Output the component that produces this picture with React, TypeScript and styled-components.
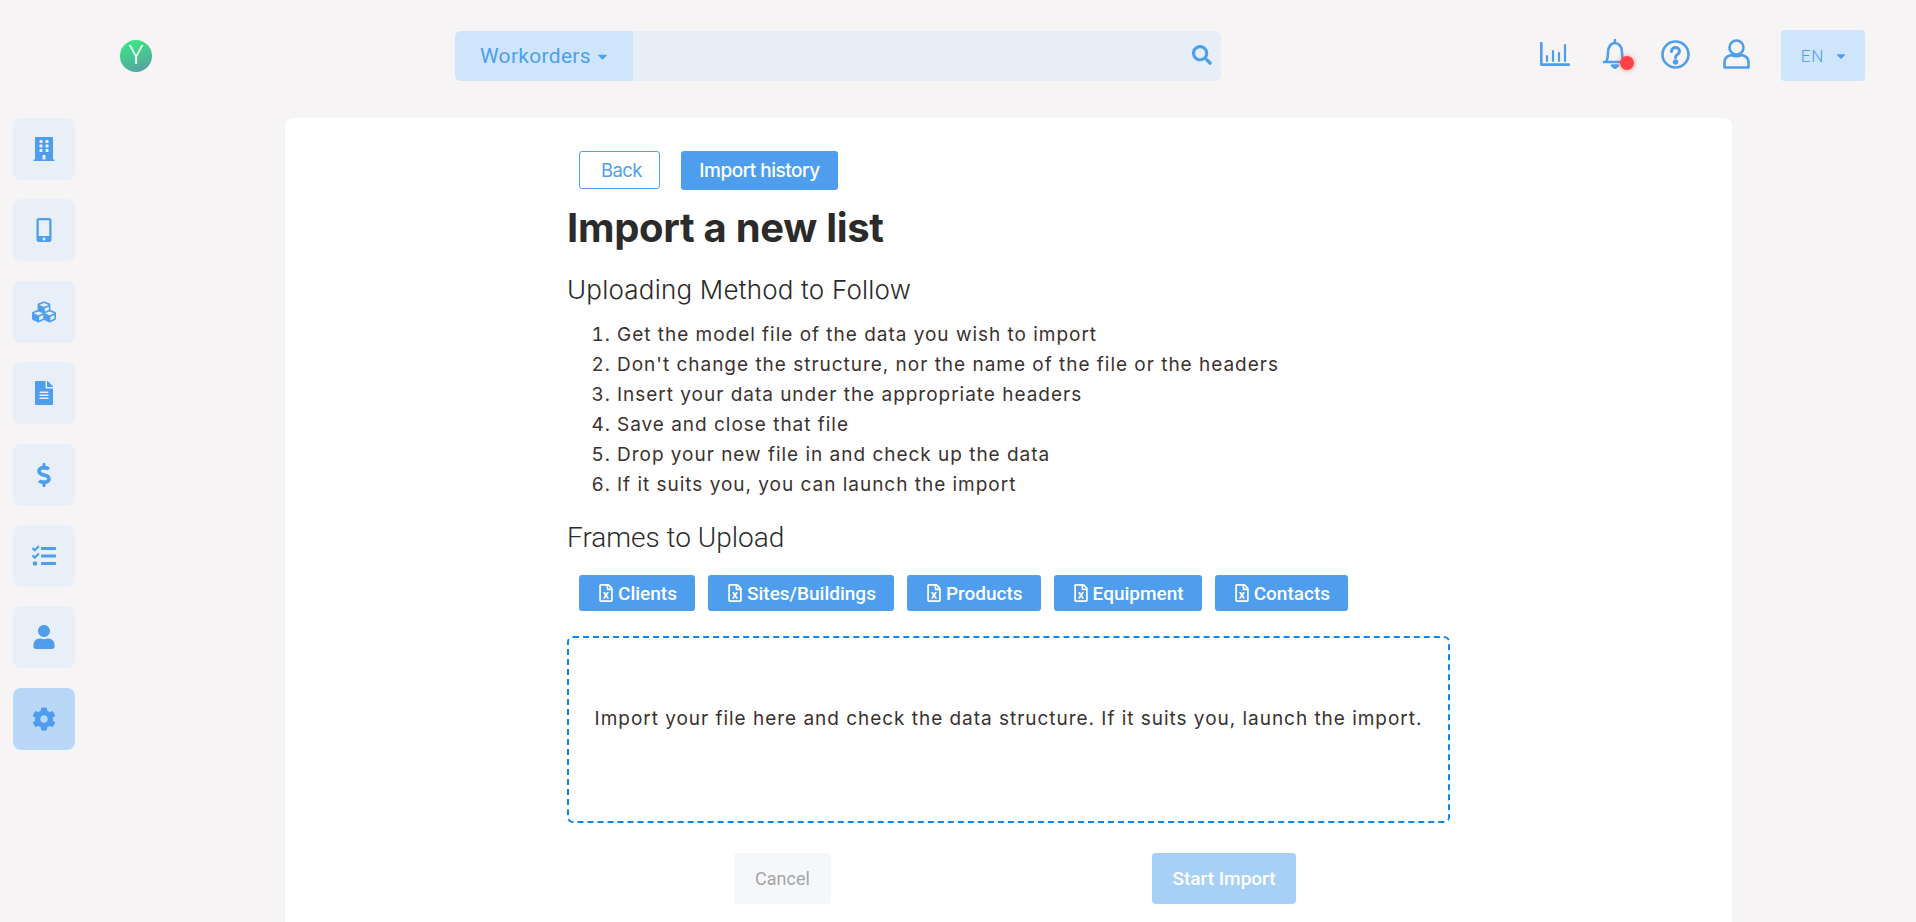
import styled, { createGlobalStyle } from "styled-components";
import {
  FaBuilding,
  FaMobileAlt,
  FaCubes,
  FaFileAlt,
  FaDollarSign,
  FaTasks,
  FaUser,
  FaCog,
  FaSearch,
  FaCaretDown,
  FaRegFileExcel,
} from "react-icons/fa";

const blue = "#4f9eee";
const plex = `"Roboto", "Noto Sans", sans-serif`;
const work = `"Inter", "Open Sans", sans-serif`;

const GlobalStyle = createGlobalStyle`
  html, body {
    margin: 0;
    height: 100%;
    overflow: hidden;
    background: #f6f4f5;
  }
  * {
    box-sizing: border-box;
  }
`;

const Page = styled.div`
  width: 1916px;
  height: 922px;
  overflow: hidden;
  font-family: ${plex};
`;

const Header = styled.header`
  display: flex;
  align-items: center;
  height: 112px;
  padding: 0 51px 0 120px;
  margin-bottom: 6px;
`;

const Logo = styled.div`
  width: 32px;
  height: 32px;
  border-radius: 50%;
  background: linear-gradient(160deg, #35f07a, #5b9aa8);
  color: #fff;
  font: 300 25px/32px ${plex};
  text-align: center;
  margin-right: 303px;
`;

const Search = styled.div`
  display: flex;
  width: 766px;
  height: 50px;
  border-radius: 6px;
  overflow: hidden;
  background: #e7eef8;
`;

const SearchSelect = styled.div`
  display: flex;
  align-items: center;
  gap: 4px;
  width: 178px;
  padding-left: 25px;
  background: #cfe5fc;
  color: ${blue};
  font-size: 21px;
  letter-spacing: 0.3px;
  svg {
    font-size: 15px;
  }
`;

const SearchField = styled.div`
  flex: 1;
  display: flex;
  align-items: center;
  justify-content: flex-end;
  padding: 0 9px 2px 0;
  color: ${blue};
  font-size: 20px;
`;

const Actions = styled.div`
  display: flex;
  align-items: center;
  margin-left: auto;
`;

const ActionIcon = styled.span<{ $gap: number }>`
  position: relative;
  display: flex;
  margin-right: ${(p) => p.$gap}px;
  margin-bottom: 4px;
`;

const RedDot = styled.i`
  position: absolute;
  right: -6px;
  bottom: -1px;
  width: 14px;
  height: 14px;
  border-radius: 50%;
  background: #ff4343;
  box-shadow: 0 0 5px rgba(255, 67, 67, 0.6);
`;

const LangButton = styled.div`
  display: flex;
  align-items: center;
  justify-content: center;
  gap: 10px;
  width: 84px;
  height: 51px;
  padding-left: 3px;
  margin-bottom: 1px;
  border-radius: 4px;
  background: #cfe5fc;
  color: ${blue};
  font-size: 17px;
  font-weight: 300;
  letter-spacing: 1px;
  svg {
    font-size: 14px;
  }
`;

const Body = styled.div`
  display: flex;
  align-items: flex-start;
`;

const Sidebar = styled.nav`
  display: flex;
  flex-direction: column;
  gap: 19.4px;
  width: 285px;
  padding-left: 13px;
`;

const SideButton = styled.a<{ $active?: boolean }>`
  display: flex;
  align-items: center;
  justify-content: center;
  width: 62px;
  height: 62px;
  border-radius: 8px;
  background: ${(p) => (p.$active ? "#b9d8f8" : "#e8eff8")};
  color: ${blue};
  font-size: 24px;
`;

const Card = styled.main`
  width: 1447px;
  height: 820px;
  padding: 33px 0 0 282px;
  background: #fff;
  border-radius: 8px;
`;

const TopButtons = styled.div`
  display: flex;
  gap: 21px;
  margin-left: 12px;
`;

const BackButton = styled.button`
  width: 81px;
  height: 38px;
  padding: 0 0 0 4px;
  border: 1px solid ${blue};
  border-radius: 3px;
  background: #fff;
  color: ${blue};
  font: 400 18.5px ${work};
  letter-spacing: -0.6px;
`;

const HistoryButton = styled.button`
  width: 157px;
  height: 39px;
  padding: 0;
  border: 0;
  border-radius: 3px;
  background: ${blue};
  color: #fff;
  font: 500 19px ${work};
  letter-spacing: -0.5px;
`;

const Title = styled.h1`
  margin: 14px 0 0;
  font: 700 40px/48px ${work};
  letter-spacing: -0.3px;
  color: #2b2b2b;
`;

const SectionTitle = styled.h2`
  margin: 21px 0 0;
  font: 300 26px/34px ${work};
  letter-spacing: 0.2px;
  color: #2b2b2b;
`;

const FramesTitle = styled.h2`
  margin: 20px 0 0;
  font: 300 28px/36px ${plex};
  color: #2b2b2b;
`;

const Steps = styled.ol`
  margin: 13px 0 0;
  padding-left: 50px;
  font: 400 19px/30px ${work};
  letter-spacing: 0.98px;
  color: #3a3230;
`;

const Frames = styled.div`
  display: flex;
  gap: 13px;
  margin: 19px 0 0 12px;
`;

const FrameButton = styled.button`
  display: flex;
  align-items: center;
  justify-content: center;
  gap: 3px;
  height: 36px;
  padding: 0 18px;
  border: 0;
  border-radius: 3px;
  background: ${blue};
  color: #fff;
  font: 500 19px ${plex};
  svg {
    font-size: 18px;
  }
`;

const DropZone = styled.div`
  display: flex;
  align-items: center;
  justify-content: center;
  width: 883px;
  height: 187px;
  margin-top: 25px;
  padding-bottom: 22px;
  border: 2px dashed #0d87ec;
  border-radius: 6px;
  font: 400 19px ${work};
  letter-spacing: 0.97px;
  color: #3a3230;
`;

const Footer = styled.div`
  display: flex;
  margin: 30px 0 0 167px;
`;

const CancelButton = styled.button`
  width: 97px;
  height: 51px;
  margin-right: 321px;
  border: 0;
  border-radius: 4px;
  background: #f6f7f9;
  color: #a5a5a5;
  font: 400 18px ${plex};
`;

const StartButton = styled.button`
  width: 144px;
  height: 51px;
  padding: 0;
  border: 0;
  border-radius: 4px;
  background: #a6d0f6;
  color: #fff;
  font: 500 19px ${plex};
`;

const LineIcon = styled.svg`
  display: block;
  fill: none;
  stroke: ${blue};
  stroke-width: 2.6;
  stroke-linecap: round;
  stroke-linejoin: round;
`;

const steps = [
  "Get the model file of the data you wish to import",
  "Don't change the structure, nor the name of the file or the headers",
  "Insert your data under the appropriate headers",
  "Save and close that file",
  "Drop your new file in and check up the data",
  "If it suits you, you can launch the import",
];

const frames = ["Clients", "Sites/Buildings", "Products", "Equipment", "Contacts"];

const sideIcons = [FaBuilding, FaMobileAlt, FaCubes, FaFileAlt, FaDollarSign, FaTasks, FaUser, FaCog];

export default function App() {
  return (
    <Page>
      <GlobalStyle />
      <Header>
        <Logo>Y</Logo>
        <Search>
          <SearchSelect>
            Workorders <FaCaretDown />
          </SearchSelect>
          <SearchField>
            <FaSearch />
          </SearchField>
        </Search>
        <Actions>
          <ActionIcon $gap={32}>
            <LineIcon width="30" height="24" viewBox="0 0 30 24">
              <path d="M1.300 1v21.600h27.600" />
              <path d="M7 19v-5M13 19V9M19 19v-8M25 19V3" strokeWidth="2.200" />
            </LineIcon>
          </ActionIcon>
          <ActionIcon $gap={33}>
            <LineIcon width="26" height="30" viewBox="0 0 26 30">
              <path d="M13 1v3M2 23h22M4 23c2-3 2-6 2-10 0-5 3-9 7-9s7 4 7 9c0 4 0 7 2 10" />
              <path d="M10 26.500h6L13 29z" fill={blue} />
            </LineIcon>
            <RedDot />
          </ActionIcon>
          <ActionIcon $gap={33}>
            <LineIcon width="29" height="29" viewBox="0 0 29 29">
              <circle cx="14.500" cy="14.500" r="13" />
              <path d="M10.500 11.500c0-2.500 2-4 4-4s4 1.500 4 3.800c0 3.200-4 3-4 6.200" strokeWidth="3" />
              <circle cx="14.500" cy="22" r="1.400" fill={blue} />
            </LineIcon>
          </ActionIcon>
          <ActionIcon $gap={31}>
            <LineIcon width="27" height="30" viewBox="0 0 27 30">
              <circle cx="13.500" cy="8.500" r="7" />
              <path d="M8 16c-4 1-6.500 3.500-6.500 7v5.500h24V23c0-3.500-2.500-6-6.500-7-3.500 1.500-7.500 1.500-11 0z" />
            </LineIcon>
          </ActionIcon>
          <LangButton>
            EN <FaCaretDown />
          </LangButton>
        </Actions>
      </Header>
      <Body>
        <Sidebar>
          {sideIcons.map((Icon, i) => (
            <SideButton key={i} $active={i === 7}>
              <Icon />
            </SideButton>
          ))}
        </Sidebar>
        <Card>
          <TopButtons>
            <BackButton>Back</BackButton>
            <HistoryButton>Import history</HistoryButton>
          </TopButtons>
          <Title>Import a new list</Title>
          <SectionTitle>Uploading Method to Follow</SectionTitle>
          <Steps>
            {steps.map((s) => (
              <li key={s}>{s}</li>
            ))}
          </Steps>
          <FramesTitle>Frames to Upload</FramesTitle>
          <Frames>
            {frames.map((f) => (
              <FrameButton key={f}>
                <FaRegFileExcel />
                {f}
              </FrameButton>
            ))}
          </Frames>
          <DropZone>Import your file here and check the data structure. If it suits you, launch the import.</DropZone>
          <Footer>
            <CancelButton>Cancel</CancelButton>
            <StartButton>Start Import</StartButton>
          </Footer>
        </Card>
      </Body>
    </Page>
  );
}
